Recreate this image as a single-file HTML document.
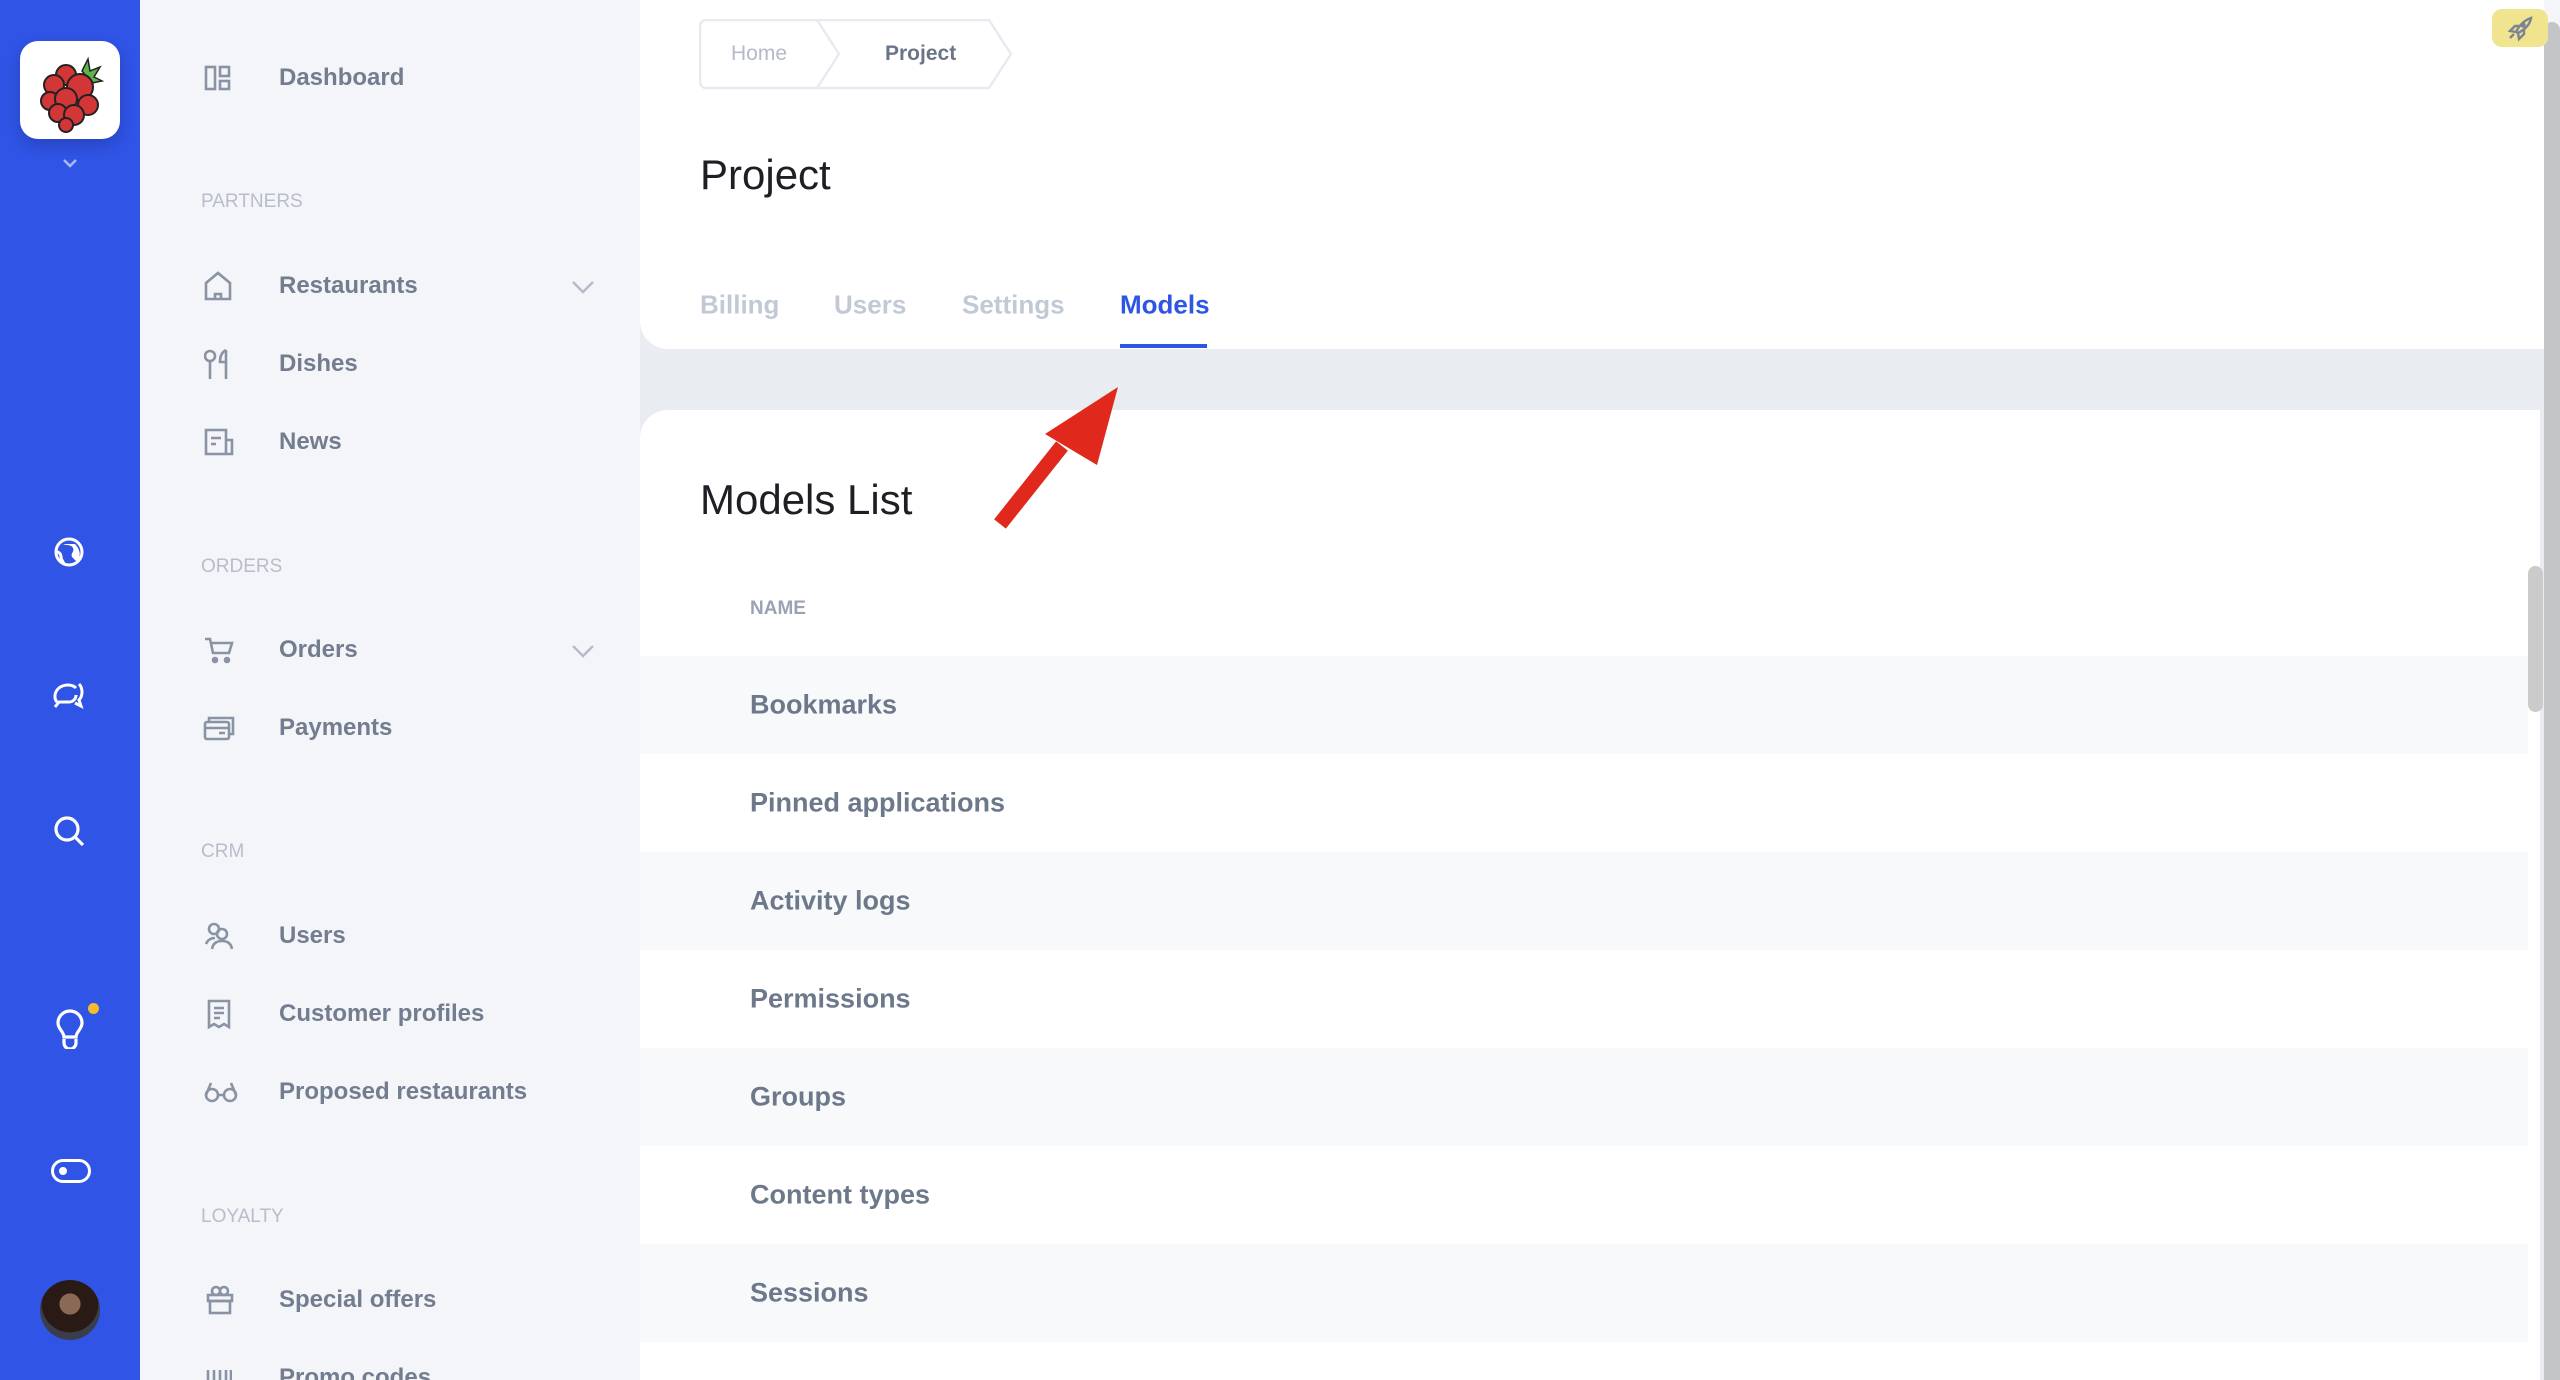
<!DOCTYPE html>
<html style="width:2560px;height:1380px;overflow:hidden"><head><meta charset="utf-8"><style>
*{margin:0;padding:0;box-sizing:border-box}
body{width:2560px;height:1380px;overflow:hidden;background:#e9ecf0;font-family:"Liberation Sans",sans-serif;position:relative}
#w{position:absolute;left:0;top:0;width:2560px;height:1380px;overflow:hidden}
.abs{position:absolute}
.rail{left:0;top:0;width:140px;height:1380px;background:#3054e6}
.panel{left:140px;top:0;width:500px;height:1380px;background:#f3f5f9}
.nav{position:absolute;left:279px;font-size:24px;font-weight:bold;color:#737d8f;transform:translateY(-50%)}
.sec{position:absolute;left:201px;font-size:19px;color:#b7bdca;transform:translateY(-50%)}
.ico{position:absolute;left:204px;transform:translateY(-50%)}
.card1{left:640px;top:0;width:1904px;height:349px;background:#fff;border-radius:0 0 0 28px}
.card2{left:640px;top:410px;width:1900px;height:970px;background:#fff;border-radius:28px 0 0 0}
.row{position:absolute;left:640px;width:1888px;height:98px}
.row span{position:absolute;left:110px;top:50%;transform:translateY(-50%);font-size:27px;font-weight:bold;color:#6d788b;white-space:nowrap}
.tab{position:absolute;top:305px;transform:translateY(-50%);font-size:26px;font-weight:bold;color:#c2c9d6}
</style></head><body><div id="w">
<div class="abs rail"></div>
<div class="abs" style="left:20px;top:41px;width:100px;height:98px;background:#fff;border-radius:18px;box-shadow:0 6px 16px rgba(0,0,30,.2)">
<svg width="100" height="98" viewBox="0 0 100 98">
<path d="M62 30 L68 18 L70 30 L80 26 L74 36 L82 40 L72 42Z" fill="#5fb54a" stroke="#222" stroke-width="1.5"/>
<g fill="#d33636" stroke="#222" stroke-width="2">
<circle cx="46" cy="34" r="10"/><circle cx="34" cy="44" r="10"/><circle cx="60" cy="46" r="13"/><circle cx="30" cy="60" r="9"/><circle cx="46" cy="58" r="11"/><circle cx="68" cy="64" r="10"/><circle cx="38" cy="72" r="9"/><circle cx="54" cy="74" r="10"/><circle cx="46" cy="84" r="7"/></g></svg></div>
<svg class="abs" style="left:62px;top:158px" width="16" height="10"><path d="M2 2l6 6 6-6" stroke="#aab8f2" stroke-width="2.5" fill="none"/></svg>
<svg class="abs" style="left:53px;top:536px" width="32" height="32" viewBox="0 0 32 32"><circle cx="16" cy="16" r="13" fill="none" stroke="#fff" stroke-width="3"/><path d="M10 8c4 2 8 0 10 4s-4 6 0 10 4 4 6 0 0-10-4-14z" fill="#fff"/><path d="M4 16c2 0 4 2 4 5s2 4 3 7" fill="none" stroke="#fff" stroke-width="3"/></svg>
<svg class="abs" style="left:51px;top:674px" width="36" height="36" viewBox="0 0 36 36" fill="none" stroke="#fff" stroke-width="3"><path d="M6 28c-3-3-3-10 2-14 5-4 13-4 17 0M4 33l4-5h10c4 0 7-3 7-7"/><path d="M28 10c4 4 4 12 0 16l2 6-6-3"/></svg>
<svg class="abs" style="left:53px;top:815px" width="34" height="34" viewBox="0 0 34 34" fill="none" stroke="#fff" stroke-width="3.2"><circle cx="14" cy="14" r="11"/><path d="M22 22l8 8"/></svg>
<svg class="abs" style="left:55px;top:1009px" width="30" height="40" viewBox="0 0 30 40" fill="none" stroke="#fff" stroke-width="3.2"><path d="M9 28c0-5-6-8-6-14a12 12 0 0 1 24 0c0 6-6 9-6 14z"/><path d="M9 30v4a6 6 0 0 0 12 0v-4"/></svg>
<div class="abs" style="left:88px;top:1003px;width:11px;height:11px;border-radius:50%;background:#f6bb2a"></div>
<div class="abs" style="left:51px;top:1159px;width:40px;height:24px;border:3.5px solid #fff;border-radius:12px"><div style="position:absolute;left:5px;top:5px;width:8px;height:8px;border-radius:50%;background:#fff"></div></div>
<div class="abs" style="left:40px;top:1280px;width:60px;height:60px;border-radius:50%;background:radial-gradient(circle at 50% 40%,#8a6a55 0 22%,#2a1a15 23% 60%,#3a3d4a 61%)"></div>
<div class="abs panel"></div>
<svg class="ico" style="top:78px" width="28" height="28" viewBox="0 0 28 28" fill="none" stroke="#8a93a4" stroke-width="2.6"><rect x="2" y="3" width="9" height="22"/><rect x="16" y="3" width="9" height="9"/><rect x="16" y="17" width="9" height="8"/></svg>
<div class="nav" style="top:78px">Dashboard</div>
<div class="sec" style="top:202px">PARTNERS</div>
<svg class="ico" style="top:286px" width="28" height="30" viewBox="0 0 28 30" fill="none" stroke="#8a93a4" stroke-width="2.6"><path d="M2 28V12L14 2l12 10v16zM11 28v-5h6v5"/></svg>
<div class="nav" style="top:286px">Restaurants</div>
<svg class="abs" style="left:571px;top:280px" width="24" height="14"><path d="M2 2l10 10 10-10" stroke="#b5bcc9" stroke-width="2.5" fill="none"/></svg>
<svg class="ico" style="top:364px" width="26" height="32" viewBox="0 0 26 32" fill="none" stroke="#8a93a4" stroke-width="2.6"><circle cx="6" cy="8" r="5"/><path d="M6 13v18M22 2v29M22 2c-4 2-6 6-6 12h6"/></svg>
<div class="nav" style="top:364px">Dishes</div>
<svg class="ico" style="top:442px" width="30" height="28" viewBox="0 0 30 28" fill="none" stroke="#8a93a4" stroke-width="2.6"><path d="M2 2h20v24H2zM22 12h6v14h-6M7 10h10M7 16h5"/></svg>
<div class="nav" style="top:442px">News</div>
<div class="sec" style="top:567px">ORDERS</div>
<svg class="ico" style="top:650px" width="30" height="28" viewBox="0 0 30 28" fill="none" stroke="#8a93a4" stroke-width="2.6"><path d="M1 3h5l3 14h16l3-10H8"/><circle cx="11" cy="24" r="2" fill="#8a93a4"/><circle cx="23" cy="24" r="2" fill="#8a93a4"/></svg>
<div class="nav" style="top:650px">Orders</div>
<svg class="abs" style="left:571px;top:644px" width="24" height="14"><path d="M2 2l10 10 10-10" stroke="#b5bcc9" stroke-width="2.5" fill="none"/></svg>
<svg class="ico" style="top:728px;left:203px" width="32" height="28" viewBox="0 0 32 28" fill="none" stroke="#8a93a4" stroke-width="2.6"><rect x="2" y="8" width="24" height="17" rx="2"/><path d="M2 14h24M16 19h6M6 8V4h24v16h-4"/></svg>
<div class="nav" style="top:728px">Payments</div>
<div class="sec" style="top:852px">CRM</div>
<svg class="ico" style="top:936px" width="32" height="28" viewBox="0 0 32 28" fill="none" stroke="#8a93a4" stroke-width="2.6"><circle cx="10" cy="7" r="5"/><circle cx="18" cy="12" r="5"/><path d="M2 22c2-5 6-6 9-6M8 27c1-6 5-8 10-8s9 2 10 8"/></svg>
<div class="nav" style="top:936px">Users</div>
<svg class="ico" style="top:1014px;left:207px" width="24" height="30" viewBox="0 0 24 30" fill="none" stroke="#8a93a4" stroke-width="2.6"><path d="M2 2h20v26l-5-3-5 3-5-3-5 3zM7 9h10M7 14h10M7 19h6"/></svg>
<div class="nav" style="top:1014px">Customer profiles</div>
<svg class="ico" style="top:1092px" width="34" height="22" viewBox="0 0 34 22" fill="none" stroke="#8a93a4" stroke-width="2.6"><circle cx="8" cy="14" r="6"/><circle cx="26" cy="14" r="6"/><path d="M14 14h6M2 14l5-12M32 14l-5-12"/></svg>
<div class="nav" style="top:1092px">Proposed restaurants</div>
<div class="sec" style="top:1217px">LOYALTY</div>
<svg class="ico" style="top:1300px;left:206px" width="28" height="30" viewBox="0 0 28 30" fill="none" stroke="#8a93a4" stroke-width="2.6"><rect x="2" y="10" width="24" height="6"/><rect x="4" y="16" width="20" height="12"/><circle cx="10" cy="6" r="4"/><circle cx="18" cy="6" r="4"/></svg>
<div class="nav" style="top:1300px">Special offers</div>
<svg class="ico" style="top:1378px;left:206px" width="26" height="20"><g stroke="#8a93a4" stroke-width="2.6"><path d="M2 2v16M8 2v16M14 2v16M20 2v16M25 2v16"/></g></svg>
<div class="nav" style="top:1378px">Promo codes</div>
<div class="abs card1"></div>
<svg class="abs" style="left:699px;top:19px" width="318" height="72" viewBox="0 0 318 72" fill="#fff" stroke="#e7eaf0" stroke-width="2.5"><path d="M7 1h283l22 34-22 34H7a6 6 0 0 1-6-6V7a6 6 0 0 1 6-6z"/><path d="M118 1l22 34-22 34" fill="none"/></svg>
<div class="abs" style="left:731px;top:54px;transform:translateY(-50%);font-size:21px;color:#b3bac8">Home</div>
<div class="abs" style="left:885px;top:54px;transform:translateY(-50%);font-size:21px;color:#6b7588;font-weight:bold">Project</div>
<div class="abs" style="left:700px;top:175px;transform:translateY(-50%);font-size:42px;color:#1d1f24">Project</div>
<div class="tab" style="left:700px">Billing</div>
<div class="tab" style="left:834px">Users</div>
<div class="tab" style="left:962px">Settings</div>
<div class="tab" style="left:1120px;color:#2f55e4">Models</div>
<div class="abs" style="left:1120px;top:344px;width:87px;height:4px;background:#2f55e4"></div>
<div class="abs card2"></div>
<div class="abs" style="left:700px;top:500px;transform:translateY(-50%);font-size:42px;color:#1d1f24">Models List</div>
<div class="abs" style="left:750px;top:609px;transform:translateY(-50%);font-size:19px;color:#9aa3b3;font-weight:bold">NAME</div>
<div class="row" style="top:656px;background:#f8f9fb"><span>Bookmarks</span></div>
<div class="row" style="top:754px"><span>Pinned applications</span></div>
<div class="row" style="top:852px;background:#f8f9fb"><span>Activity logs</span></div>
<div class="row" style="top:950px"><span>Permissions</span></div>
<div class="row" style="top:1048px;background:#f8f9fb"><span>Groups</span></div>
<div class="row" style="top:1146px"><span>Content types</span></div>
<div class="row" style="top:1244px;background:#f8f9fb"><span>Sessions</span></div>
<div class="row" style="top:1342px;height:38px"><span style="top:50px">Recently viewed</span></div>
<div class="abs" style="left:2544px;top:0;width:16px;height:1380px;background:#f3f5f9"></div>
<div class="abs" style="left:2544px;top:22px;width:16px;height:1358px;background:#c4c5c7;border-radius:8px 8px 0 0"></div>
<div class="abs" style="left:2528px;top:566px;width:15px;height:146px;background:#cbcbcb;border-radius:8px"></div>
<div class="abs" style="left:2492px;top:9px;width:56px;height:38px;background:#f0e48e;border-radius:10px"></div>
<svg class="abs" style="left:2506px;top:14px" width="28" height="28" viewBox="0 0 28 28" fill="none" stroke="#7b8394" stroke-width="2.4"><path d="M10 18c4-8 9-12 15-14-1 6-5 11-13 15zM10 18l-6-1 5-5h5M12 19l1 6 5-5v-5M4 24l4-4"/><circle cx="17" cy="11" r="1.5" fill="#7b8394"/></svg>
<svg class="abs" style="left:0;top:0" width="2560" height="1380"><path d="M1000 524 L1062 446" stroke="#e0291c" stroke-width="15"/><polygon points="1118,387 1045,434 1097,465" fill="#e0291c"/></svg>
</div></body></html>
